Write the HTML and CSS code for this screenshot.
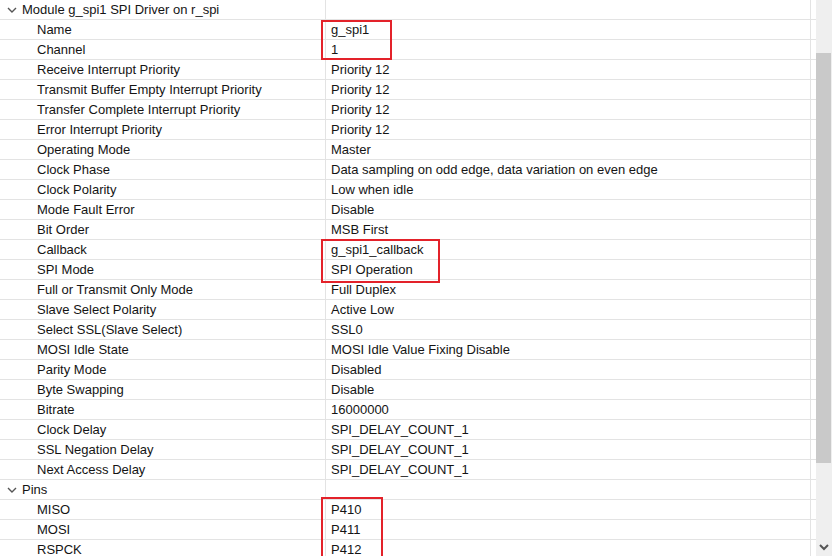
FILE: index.html
```html
<!DOCTYPE html>
<html>
<head>
<meta charset="utf-8">
<link rel="stylesheet" href="styles.css">
</head>
<body>
<div class="frame">
  <div class="table">
    <div class="row group"><div class="key"><svg class="chev" width="10" height="6" viewBox="0 0 10 6"><path d="M1 1 L5 5 L9 1" fill="none" stroke="#555" stroke-width="1.4"/></svg>Module g_spi1 SPI Driver on r_spi</div><div class="val"></div><div class="tail"></div></div>
    <div class="row"><div class="key">Name</div><div class="val">g_spi1</div><div class="tail"></div></div>
    <div class="row"><div class="key">Channel</div><div class="val">1</div><div class="tail"></div></div>
    <div class="row"><div class="key">Receive Interrupt Priority</div><div class="val">Priority 12</div><div class="tail"></div></div>
    <div class="row"><div class="key">Transmit Buffer Empty Interrupt Priority</div><div class="val">Priority 12</div><div class="tail"></div></div>
    <div class="row"><div class="key">Transfer Complete Interrupt Priority</div><div class="val">Priority 12</div><div class="tail"></div></div>
    <div class="row"><div class="key">Error Interrupt Priority</div><div class="val">Priority 12</div><div class="tail"></div></div>
    <div class="row"><div class="key">Operating Mode</div><div class="val">Master</div><div class="tail"></div></div>
    <div class="row"><div class="key">Clock Phase</div><div class="val">Data sampling on odd edge, data variation on even edge</div><div class="tail"></div></div>
    <div class="row"><div class="key">Clock Polarity</div><div class="val">Low when idle</div><div class="tail"></div></div>
    <div class="row"><div class="key">Mode Fault Error</div><div class="val">Disable</div><div class="tail"></div></div>
    <div class="row"><div class="key">Bit Order</div><div class="val">MSB First</div><div class="tail"></div></div>
    <div class="row"><div class="key">Callback</div><div class="val">g_spi1_callback</div><div class="tail"></div></div>
    <div class="row"><div class="key">SPI Mode</div><div class="val">SPI Operation</div><div class="tail"></div></div>
    <div class="row"><div class="key">Full or Transmit Only Mode</div><div class="val">Full Duplex</div><div class="tail"></div></div>
    <div class="row"><div class="key">Slave Select Polarity</div><div class="val">Active Low</div><div class="tail"></div></div>
    <div class="row"><div class="key">Select SSL(Slave Select)</div><div class="val">SSL0</div><div class="tail"></div></div>
    <div class="row"><div class="key">MOSI Idle State</div><div class="val">MOSI Idle Value Fixing Disable</div><div class="tail"></div></div>
    <div class="row"><div class="key">Parity Mode</div><div class="val">Disabled</div><div class="tail"></div></div>
    <div class="row"><div class="key">Byte Swapping</div><div class="val">Disable</div><div class="tail"></div></div>
    <div class="row"><div class="key">Bitrate</div><div class="val">16000000</div><div class="tail"></div></div>
    <div class="row"><div class="key">Clock Delay</div><div class="val">SPI_DELAY_COUNT_1</div><div class="tail"></div></div>
    <div class="row"><div class="key">SSL Negation Delay</div><div class="val">SPI_DELAY_COUNT_1</div><div class="tail"></div></div>
    <div class="row"><div class="key">Next Access Delay</div><div class="val">SPI_DELAY_COUNT_1</div><div class="tail"></div></div>
    <div class="row group"><div class="key"><svg class="chev" width="10" height="6" viewBox="0 0 10 6"><path d="M1 1 L5 5 L9 1" fill="none" stroke="#555" stroke-width="1.4"/></svg>Pins</div><div class="val"></div><div class="tail"></div></div>
    <div class="row"><div class="key">MISO</div><div class="val">P410</div><div class="tail"></div></div>
    <div class="row"><div class="key">MOSI</div><div class="val">P411</div><div class="tail"></div></div>
    <div class="row"><div class="key">RSPCK</div><div class="val">P412</div><div class="tail"></div></div>
    <div class="mark mark1"></div>
    <div class="mark mark2"></div>
    <div class="mark mark3"></div>
  </div>
  <div class="scrollbar">
    <div class="thumb"></div>
    <svg class="arrow" width="10" height="7" viewBox="0 0 10 7"><path d="M1 1 L5 5 L9 1" fill="none" stroke="#555" stroke-width="2"/></svg>
  </div>
</div>
</body>
</html>
```
FILE: styles.css
```css
html, body {
  margin: 0;
  padding: 0;
  background: #ffffff;
  overflow: hidden;
}
body {
  font-family: "Liberation Sans", Arial, sans-serif;
  font-size: 13px;
  color: #141414;
}
.frame {
  display: flex;
  width: 832px;
  height: 556px;
  overflow: hidden;
}
.table {
  position: relative;
  width: 816px;
  flex: none;
}
.row {
  display: grid;
  grid-template-columns: 326px 485px 5px;
  height: 20px;
  box-sizing: border-box;
  border-bottom: 1px solid #e3e3e3;
}
.key, .val {
  display: flex;
  align-items: center;
  white-space: nowrap;
  border-right: 1px solid #e3e3e3;
  height: 19px;
  line-height: 19px;
}
.key {
  padding-left: 37px;
}
.val {
  padding-left: 5px;
}
.group .key {
  padding-left: 7px;
}
.chev {
  margin-right: 5px;
  flex: none;
}
.mark {
  position: absolute;
  border: 2px solid #e3222a;
  box-sizing: border-box;
}
.mark1 { left: 321px; top: 20px; width: 71px; height: 40px; }
.mark2 { left: 321px; top: 239px; width: 119px; height: 44px; }
.mark3 { left: 321px; top: 497px; width: 62px; height: 70px; }
.scrollbar {
  position: relative;
  width: 16px;
  flex: none;
  height: 556px;
  background: #efefef;
  display: flex;
  flex-direction: column;
}
.thumb {
  margin-top: 53px;
  height: 410px;
  width: 15px;
  background: #c9c9c9;
}
.arrow {
  position: absolute;
  left: 3px;
  bottom: 5px;
}
```
